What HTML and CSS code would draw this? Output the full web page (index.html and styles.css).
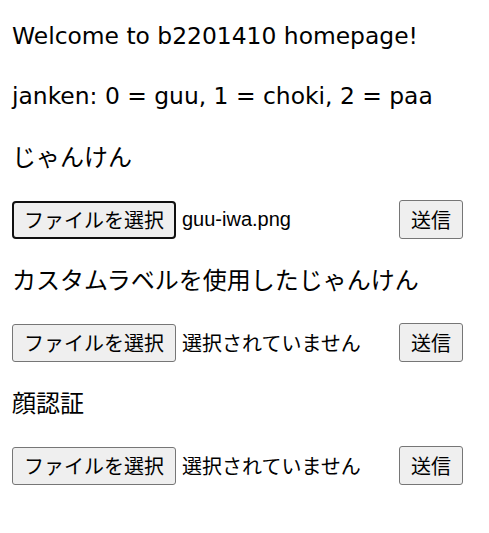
FILE: index.html
```html
<!DOCTYPE html>
<html lang="ja">
<head>
<meta charset="utf-8">
<title>b2201410 homepage</title>
<link rel="stylesheet" href="styles.css">
</head>
<body>
<main class="page">
  <p class="line">Welcome to b2201410 homepage!</p>
  <p class="line">janken: 0 = guu, 1 = choki, 2 = paa</p>
  <p class="line jp">じゃんけん</p>
  <form class="upload">
    <div class="file">
      <button type="button" class="btn file-btn is-focused">ファイルを選択</button>
      <span class="file-name latin">guu-iwa.png</span>
    </div>
    <button type="button" class="btn submit-btn">送信</button>
  </form>
  <p class="line jp">カスタムラベルを使用したじゃんけん</p>
  <form class="upload">
    <div class="file">
      <button type="button" class="btn file-btn">ファイルを選択</button>
      <span class="file-name">選択されていません</span>
    </div>
    <button type="button" class="btn submit-btn">送信</button>
  </form>
  <p class="line jp">顔認証</p>
  <form class="upload">
    <div class="file">
      <button type="button" class="btn file-btn">ファイルを選択</button>
      <span class="file-name">選択されていません</span>
    </div>
    <button type="button" class="btn submit-btn">送信</button>
  </form>
</main>
</body>
</html>
```

FILE: styles.css
```css
html, body {
  margin: 0;
  padding: 0;
  background: #ffffff;
  color: #000000;
}

.page {
  padding: 18px 0 0 12px;
  font-family: "DejaVu Sans", "Noto Sans CJK JP", sans-serif;
  font-size: 23.4px;
}

.line {
  margin: 0;
  height: 36px;
  line-height: 36px;
  white-space: nowrap;
}

.line + .line {
  margin-top: 24px;
}

.jp {
  font-family: "Noto Sans CJK JP", sans-serif;
  font-size: 24px;
}

.upload {
  display: flex;
  align-items: center;
  height: 39px;
  margin: 26px 0 22px;
}

.file {
  display: flex;
  align-items: center;
  width: 387px;
  gap: 6px;
}

.btn {
  box-sizing: border-box;
  height: 38px;
  margin: 0;
  padding: 0;
  display: flex;
  align-items: center;
  justify-content: center;
  background: #efefef;
  border: 1px solid #767676;
  border-radius: 3px;
  color: #000000;
  font-family: "Noto Sans CJK JP", sans-serif;
  font-size: 20px;
  line-height: 1;
}

.file-btn {
  width: 164px;
}

.file-btn.is-focused {
  border: 2px solid #101010;
  border-radius: 4px;
}

.submit-btn {
  width: 64px;
  height: 39px;
}

.file-name {
  font-family: "Noto Sans CJK JP", sans-serif;
  font-size: 20px;
  white-space: nowrap;
}

.file-name.latin {
  font-family: "Liberation Sans", Arial, sans-serif;
}
```
